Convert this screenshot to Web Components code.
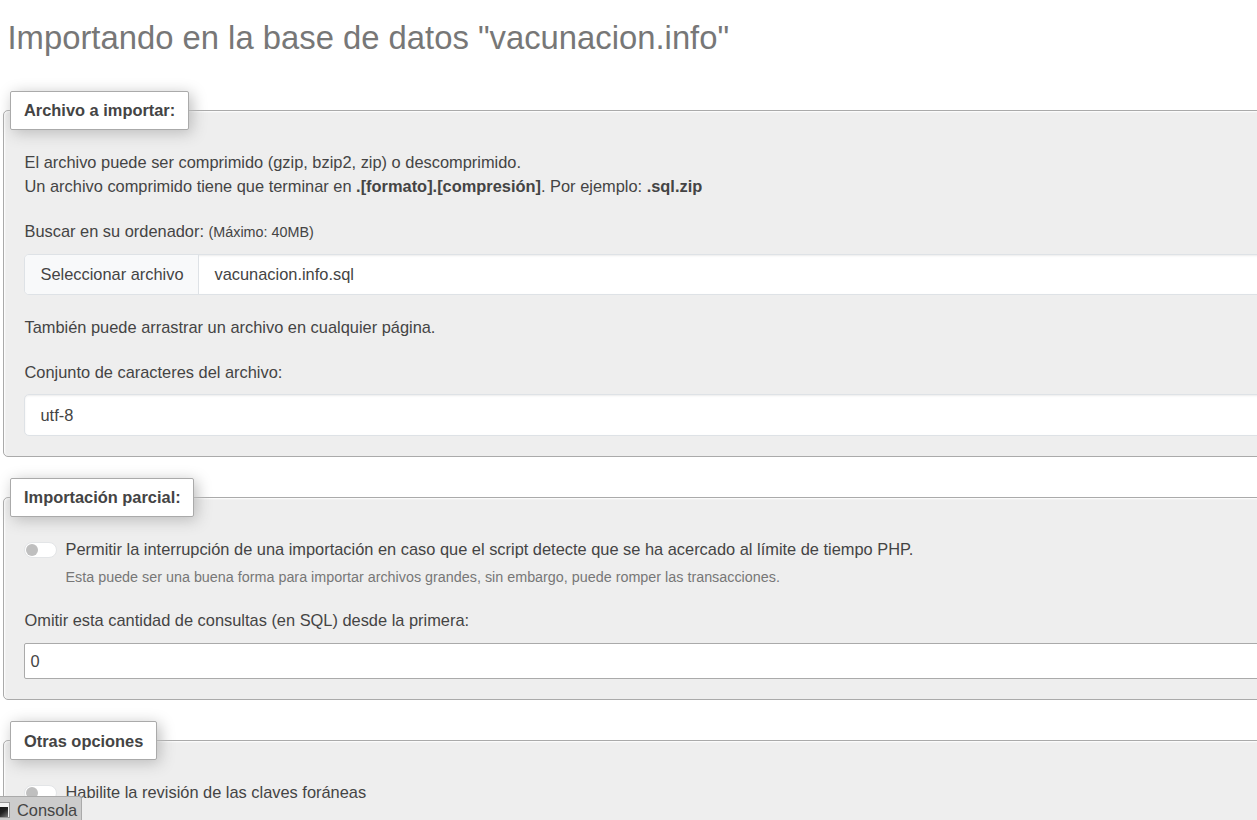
<!DOCTYPE html>
<html lang="es">
<head>
<meta charset="utf-8">
<title>Importar</title>
<style>
html, body { margin: 0; height: 820px; overflow: hidden; background: #fff; }
body { font: 16.4px/24px "Liberation Sans", Arial, sans-serif; color: #444; }
</style>
</head>
<body>
<import-page></import-page>
<script>
function define(name, html) {
  const template = document.createElement('template');
  template.innerHTML = html;
  customElements.define(name, class extends HTMLElement {
    constructor() {
      super();
      this.attachShadow({ mode: 'open' }).append(template.content.cloneNode(true));
    }
  });
}

define('page-title', `
<style>
:host { display: block; padding: 16px 0 0 7.5px; height: 94px; box-sizing: border-box; }
h2 { margin: 0; font-size: 32.8px; line-height: 43px; font-weight: 400; color: #777; white-space: nowrap; }
</style>
<h2><slot></slot></h2>`);

define('field-group', `
<style>
:host { display: block; box-sizing: border-box; margin: 16px -30px 40px 3px; padding: 0 20px; background: #eee;
  border: 1px solid #aaa; border-radius: 5px; box-shadow: 1px 1px 2px #fff inset; }
.legend { display: block; box-sizing: border-box; width: max-content; height: 39px; margin: -20px 0 20px -14px;
  padding: 0 13px; line-height: 37px; font-weight: 700; border: 1px solid #aaa; border-radius: 2px;
  background: #fff; box-shadow: 3px 3px 15px #bbb; white-space: nowrap; }
:host(.second) .legend { padding-right: 12px; }
:host(.third) .legend { line-height: 38px; }
</style>
<div class="legend"><slot name="legend"></slot></div>
<slot></slot>`);

define('text-line', `
<style>
:host { display: block; height: 24px; line-height: 24px; padding-left: .5px; white-space: nowrap; }
::slotted(small) { font-size: 14.35px; }
</style>
<slot></slot>`);

define('file-field', `
<style>
:host { display: flex; box-sizing: border-box; height: 41px; line-height: 39px; border: 1px solid #dee2e6;
  border-radius: 5px; background: #fff; overflow: hidden; box-shadow: inset 0 1px 2px rgba(0,0,0,.075); }
.button { box-sizing: border-box; width: 174px; padding-left: 15.5px; background: #f8f9fa; border-right: 1px solid #dee2e6; }
.name { padding-left: 15.5px; }
</style>
<div class="button"><slot name="button"></slot></div><div class="name"><slot></slot></div>`);

define('select-field', `
<style>
:host { display: block; box-sizing: border-box; height: 42px; padding-left: 15.5px; line-height: 40px;
  border: 1px solid #dee2e6; border-radius: 5px; background: #fff; box-shadow: inset 0 1px 2px rgba(0,0,0,.075); }
</style>
<slot></slot>`);

define('number-field', `
<style>
:host { display: block; box-sizing: border-box; height: 36px; padding-left: 5.5px; line-height: 34px;
  border: 1px solid #aaa; border-radius: 2px; background: #fff; }
</style>
<slot></slot>`);

define('switch-field', `
<style>
:host { display: flex; height: 24px; white-space: nowrap; }
.track { flex: none; box-sizing: border-box; width: 33px; height: 16px; margin: 4.5px 8.5px 0 0; padding: 1px;
  border: 1px solid #e3e5e7; border-radius: 8px; background: #fff; }
.thumb { width: 12px; height: 12px; border-radius: 50%; background: #bfbfbf; }
</style>
<div class="track"><div class="thumb"></div></div>
<slot></slot>`);

define('help-text', `
<style>
:host { display: block; padding-left: 41.5px; height: 22px; line-height: 22px; font-size: 14.35px; color: #777; white-space: nowrap; }
</style>
<slot></slot>`);

define('console-tab', `
<style>
:host { position: absolute; left: 0; top: 796px; display: flex; align-items: flex-start; box-sizing: border-box;
  width: 82px; height: 24px; border: 1px solid #aaa; border-width: 1px 1px 0 0; border-radius: 0 3px 0 0;
  background: #ccc; line-height: 27px; overflow: hidden; white-space: nowrap; }
svg { flex: none; width: 11px; height: 20px; margin-right: 6px; margin-top: 3px; }
</style>
<svg viewBox="0 0 11 20" aria-hidden="true">
  <defs><linearGradient id="screen" x2="1" y2="1"><stop stop-color="#111"/><stop offset=".55" stop-color="#222"/><stop offset="1" stop-color="#777"/></linearGradient></defs>
  <rect x="-6" y="2.5" width="15.5" height="15" fill="#f4f4f4" stroke="#999"/>
  <rect x="-5" y="7" width="13" height="10" fill="url(#screen)"/>
</svg>
<slot></slot>`);

define('import-page', `
<style>
:host { display: block; height: 820px; overflow: hidden; }
.first { height: 347px; }
.second { height: 203px; }
.third { height: 203px; }
.gap20 { margin-top: 20px; }
.gap21 { margin-top: 21px; }
.label { margin-bottom: 11px; }
.charset { margin-bottom: 10px; }
</style>
<page-title>Importando en la base de datos "vacunacion.info"</page-title>
<field-group class="first">
  <span slot="legend">Archivo a importar:</span>
  <text-line>El archivo puede ser comprimido (gzip, bzip2, zip) o descomprimido.</text-line>
  <text-line>Un archivo comprimido tiene que terminar en <b>.[formato].[compresión]</b>. Por ejemplo: <b>.sql.zip</b></text-line>
  <text-line class="gap21 label">Buscar en su ordenador: <small>(Máximo: 40MB)</small></text-line>
  <file-field><span slot="button">Seleccionar archivo</span>vacunacion.info.sql</file-field>
  <text-line class="gap20">También puede arrastrar un archivo en cualquier página.</text-line>
  <text-line class="gap21 charset">Conjunto de caracteres del archivo:</text-line>
  <select-field>utf-8</select-field>
</field-group>
<field-group class="second">
  <span slot="legend">Importación parcial:</span>
  <switch-field>Permitir la interrupción de una importación en caso que el script detecte que se ha acercado al límite de tiempo PHP.</switch-field>
  <help-text style="margin-top:5px">Esta puede ser una buena forma para importar archivos grandes, sin embargo, puede romper las transacciones.</help-text>
  <text-line style="margin:20px 0 11px">Omitir esta cantidad de consultas (en SQL) desde la primera:</text-line>
  <number-field>0</number-field>
</field-group>
<field-group class="third">
  <span slot="legend">Otras opciones</span>
  <switch-field>Habilite la revisión de las claves foráneas</switch-field>
</field-group>
<console-tab>Consola</console-tab>`);
</script>
</body>
</html>
